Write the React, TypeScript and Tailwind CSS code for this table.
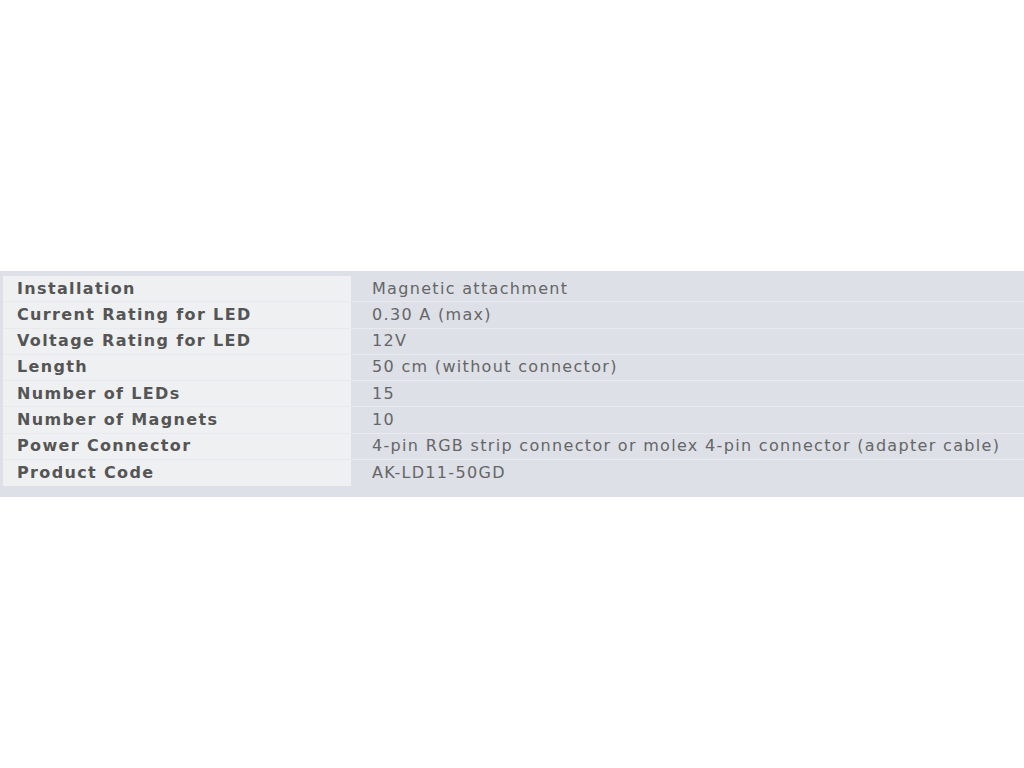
const specs = [
  { label: "Installation", value: "Magnetic attachment" },
  { label: "Current Rating for LED", value: "0.30 A (max)" },
  { label: "Voltage Rating for LED", value: "12V" },
  { label: "Length", value: "50 cm (without connector)" },
  { label: "Number of LEDs", value: "15" },
  { label: "Number of Magnets", value: "10" },
  { label: "Power Connector", value: "4-pin RGB strip connector or molex 4-pin connector (adapter cable)" },
  { label: "Product Code", value: "AK-LD11-50GD" },
];

export default function App() {
  return (
    <div className="w-[1024px] h-[768px] bg-white overflow-hidden" style={{ fontFamily: '"DejaVu Sans", Verdana, sans-serif' }}>
      <div className="mt-[271px] bg-[#dde0e6] pt-[5px] pb-[11px] pl-[3px]">
        {specs.map((row) => (
          <div key={row.label} className="flex h-[26.25px] border-b border-[#e9eaee] last:border-b-0">
            <div className="w-[348px] shrink-0 bg-[#eff0f2] pl-[14px] flex items-center text-[16px] font-bold tracking-[1.35px] text-[#555555]">
              {row.label}
            </div>
            <div className="pl-[21px] flex items-center text-[16px] tracking-[1.32px] text-[#666666] whitespace-nowrap">
              {row.value}
            </div>
          </div>
        ))}
      </div>
    </div>
  );
}
